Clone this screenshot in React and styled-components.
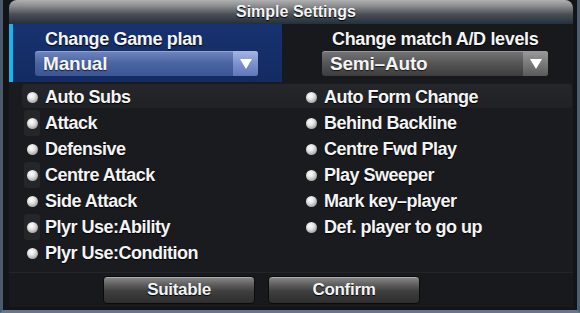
import React from "react";
import styled, { createGlobalStyle } from "styled-components";

const Global = createGlobalStyle`
  html, body { margin: 0; padding: 0; background: #0d0f12; }
  * { box-sizing: border-box; }
`;

const Frame = styled.div`
  width: 580px;
  height: 313px;
  background: #121418;
  border-left: 3px solid #4b5a6c;
  border-right: 3px solid #4e5c70;
  border-bottom: 3px solid #66768c;
  padding: 0 4px 3px 6px;
  display: flex;
  font-family: "Liberation Sans", Arial, sans-serif;
  font-weight: bold;
  color: #f4f4f4;
`;

const Panel = styled.div`
  flex: 1;
  display: flex;
  flex-direction: column;
  background: #191b1f;
  border-radius: 8px 8px 0 0;
  overflow: hidden;
`;

const TitleBar = styled.div`
  height: 24px;
  flex: none;
  display: flex;
  align-items: center;
  justify-content: center;
  font-size: 16px;
  background: linear-gradient(#b0b0b0 0%, #8a8c8e 25%, #4a4e54 60%, #22303e 100%);
  text-shadow: 0 1px 1px #000;
  padding-left: 10px;
`;

const Header = styled.div`
  display: grid;
  grid-template-columns: 273px 1fr;
  height: 58px;
  flex: none;
`;

const Section = styled.div`
  display: flex;
  flex-direction: column;
  padding: ${(p) => (p.$active ? "4px 0 0 22px" : "4px 0 0 40px")};
  background: ${(p) => (p.$active ? "linear-gradient(#173270, #132b62)" : "#17191c")};
  border-left: ${(p) => (p.$active ? "4px solid #1cb4ee" : "none")};
`;

const Label = styled.div`
  font-size: 18px;
  letter-spacing: -0.35px;
  line-height: 22px;
  padding-left: ${(p) => p.$indent || 0}px;
  text-shadow: 0 1px 1px #000;
`;

const Select = styled.div`
  width: ${(p) => p.$w}px;
  height: 25px;
  margin-top: 1px;
  display: flex;
  align-items: center;
  border-radius: 3px;
  overflow: hidden;
  background: ${(p) =>
    p.$blue
      ? "linear-gradient(#6f86be, #4a64a2 50%, #3c5594)"
      : "linear-gradient(#767676, #555 50%, #3d3d3d)"};
  box-shadow: inset 0 1px 0 rgba(255,255,255,0.25);
`;

const SelectText = styled.div`
  flex: 1;
  font-size: 19px;
  letter-spacing: -0.2px;
  padding-left: 8px;
  text-shadow: 0 1px 1px rgba(0,0,0,0.7);
`;

const Arrow = styled.div`
  width: 25px;
  height: 100%;
  display: flex;
  align-items: center;
  justify-content: center;
  background: ${(p) =>
    p.$blue
      ? "linear-gradient(#a4b6e2, #7c92cc 50%, #6078b8)"
      : "linear-gradient(#9a9a9a, #7a7a7a 50%, #5a5a5a)"};
`;

const List = styled.div`
  display: flex;
  flex-direction: column;
  padding: 2px 1px 0 11px;
  flex: none;
`;

const TopRow = styled.div`
  display: grid;
  grid-template-columns: 279px 1fr;
  height: 24px;
  margin-left: 2px;
  background: linear-gradient(#24262a, #202226);
  border-radius: 4px;
  align-items: center;
  margin-bottom: 2px;
`;

const Columns = styled.div`
  display: grid;
  grid-template-columns: 281px 1fr;
`;

const Col = styled.div`
  display: flex;
  flex-direction: column;
`;

const Item = styled.div`
  height: 26px;
  display: flex;
  align-items: center;
  gap: 7px;
  padding-left: ${(p) => p.$pad ?? 6}px;
  font-size: 18px;
  letter-spacing: -0.5px;
  text-shadow: 0 1px 1px #000;
  white-space: nowrap;
`;

const BulletWrap = styled.div`
  width: 16px;
  height: 26px;
  margin-left: -2px;
  margin-right: -2px;
  display: flex;
  align-items: center;
  justify-content: center;
  background: ${(p) => (p.$shade ? "#24262a" : "transparent")};
  border-radius: 3px;
`;

const Bullet = styled.div`
  width: 11px;
  height: 11px;
  border-radius: 50%;
  background: radial-gradient(circle at 40% 35%, #ffffff 0%, #e4e4e4 35%, #9a9a9a 80%, #6a6a6a 100%);
`;

const Footer = styled.div`
  flex: 1;
  display: flex;
  gap: 13px;
  align-items: center;
  padding-left: 94px;
  border-top: 1px solid #22252a;
  margin-top: 6px;
  background: #17191c;
`;

const Button = styled.div`
  width: 152px;
  height: 28px;
  display: flex;
  align-items: center;
  justify-content: center;
  font-size: 17px;
  letter-spacing: -0.3px;
  border-radius: 4px;
  border: 1px solid #0b0b0b;
  background: linear-gradient(#8a8a8a 0%, #5e5e5e 30%, #3e3e3e 55%, #2e2e2e 100%);
  box-shadow: inset 0 1px 0 rgba(255,255,255,0.3);
  text-shadow: 0 1px 1px #000;
`;

const ArrowIcon = () => (
  <svg width="14" height="12" viewBox="0 0 14 12">
    <path d="M1 1 H13 L7 11 Z" fill="#fff" />
  </svg>
);

const leftItems = ["Attack", "Defensive", "Centre Attack", "Side Attack", "Plyr Use:Ability", "Plyr Use:Condition"];
const rightItems = ["Behind Backline", "Centre Fwd Play", "Play Sweeper", "Mark key\u2013player", "Def. player to go up"];

export default function App() {
  return (
    <>
      <Global />
      <Frame>
        <Panel>
          <TitleBar>Simple Settings</TitleBar>
          <Header>
            <Section $active>
              <Label $indent={10}>Change Game plan</Label>
              <Select $blue $w={223}>
                <SelectText>Manual</SelectText>
                <Arrow $blue>
                  <ArrowIcon />
                </Arrow>
              </Select>
            </Section>
            <Section>
              <Label $indent={10}>Change match A/D levels</Label>
              <Select $w={226}>
                <SelectText>Semi&#8211;Auto</SelectText>
                <Arrow>
                  <ArrowIcon />
                </Arrow>
              </Select>
            </Section>
          </Header>
          <List>
            <TopRow>
              <Item $pad={4}>
                <BulletWrap><Bullet /></BulletWrap>
                Auto Subs
              </Item>
              <Item $pad={4}>
                <BulletWrap><Bullet /></BulletWrap>
                Auto Form Change
              </Item>
            </TopRow>
            <Columns>
              <Col>
                {leftItems.map((t, i) => (
                  <Item key={t}>
                    <BulletWrap $shade={i % 2 === 0}><Bullet /></BulletWrap>
                    {t}
                  </Item>
                ))}
              </Col>
              <Col>
                {rightItems.map((t) => (
                  <Item key={t} $pad={4}>
                    <BulletWrap><Bullet /></BulletWrap>
                    {t}
                  </Item>
                ))}
              </Col>
            </Columns>
          </List>
          <Footer>
            <Button>Suitable</Button>
            <Button>Confirm</Button>
          </Footer>
        </Panel>
      </Frame>
    </>
  );
}
